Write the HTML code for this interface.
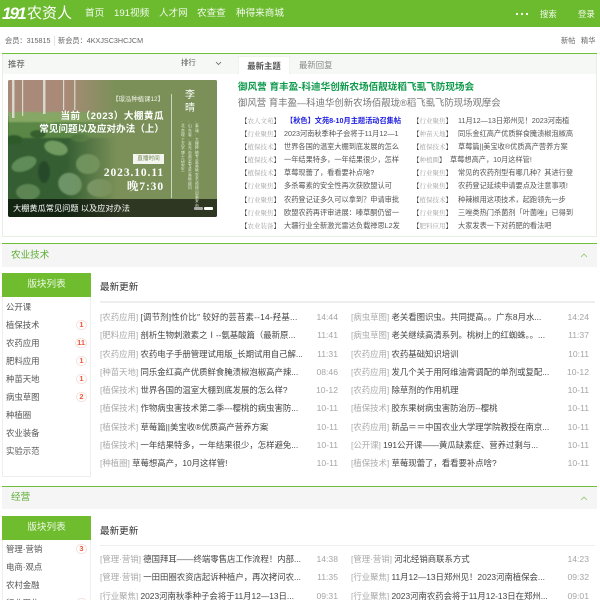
<!DOCTYPE html>
<html lang="zh-CN"><head><meta charset="utf-8"><title>191农资人</title>
<style>
*{margin:0;padding:0;box-sizing:border-box}
html,body{width:600px;height:600px;overflow:hidden;background:#fff}
body{position:relative;font-family:"Liberation Sans","Noto Sans CJK SC",sans-serif;font-size:8.4px;color:#444}
.a{position:absolute;white-space:nowrap}
.nav{left:0;top:0;width:600px;height:27px;background:#6cbb2f}
.nv{color:#f2f9ec;font-size:9.6px;top:8px;line-height:12px}
.sub{color:#666;top:35px;line-height:12px;font-size:7.2px}
.box{border:1px solid #e6efe1;border-top:0;background:#fff}
.ln{background:#6cc03a;height:1px}
.hd{background:#f5f8f5}
.hot{font-size:7.2px;line-height:13.2px;color:#555;overflow:hidden}
.hot div{white-space:nowrap;overflow:hidden;height:13.2px}
.hot i{font-style:normal;font-family:"Liberation Serif","Noto Serif CJK SC",serif;color:#a0a0a0;font-size:6.5px;display:inline-block;width:43px}
.hot i b{font-weight:400;color:#444}
.sec{background:#f5f5f5;left:2px;width:595px;height:24px}
.sect{color:#5fae35;font-size:9.6px;left:11px;line-height:14px}
.side{left:2px;width:89px;border:1px solid #eee;border-top:0;background:#fff}
.sh{left:2px;width:89px;height:24px;background:#6fbd2e;color:#eef8e6;font-size:9.6px;text-align:center;line-height:24px}
.si{height:18px;line-height:18px;padding-left:3px;color:#555;font-size:8.4px;position:relative}
.si u{text-decoration:none;position:absolute;right:3px;top:4px;min-width:11px;height:10px;border:1px solid #f4e0dc;border-radius:6px;color:#f0583c;font-size:7.5px;line-height:8.5px;text-align:center;padding:0 1px;font-weight:700}
.up{font-size:9.6px;color:#333;left:100px;line-height:14px}
.dv{height:2px;background:#eee}
.ls{line-height:18.3px;font-size:8.4px;color:#444}
.ls div{height:18.3px;white-space:nowrap;position:relative}
.ls em{font-style:normal;color:#aaa;font-size:8.4px}
.ls s{text-decoration:none;position:absolute;right:0;top:0;color:#a5a5a5;font-size:8.6px;letter-spacing:0}
.vt{white-space:normal;word-break:break-all;width:5px;font-size:3.8px;line-height:4.4px;color:#e6ebd8;top:120px}
</style></head><body>

<div class="a nav"></div>
<div class="a" style="left:2px;top:4px;color:#fff;font:italic 700 17px/20px 'Liberation Sans',sans-serif;letter-spacing:-1.8px">191</div>
<div class="a" style="left:27px;top:5px;color:#fff;font-size:15px;line-height:18px">农资人</div>
<div class="a nv" style="left:85px">首页</div>
<div class="a nv" style="left:114px">191视频</div>
<div class="a nv" style="left:159px">人才网</div>
<div class="a nv" style="left:197px">农查查</div>
<div class="a nv" style="left:236px">种得来商城</div>
<svg class="a" style="left:515px;top:12px" width="15" height="4"><circle cx="2" cy="2" r="1.1" fill="#fff"/><circle cx="7" cy="2" r="1.1" fill="#fff"/><circle cx="12" cy="2" r="1.1" fill="#fff"/></svg>
<div class="a nv" style="left:540px;font-size:8.4px">搜索</div>
<div class="a nv" style="left:578px;font-size:8.4px">登录</div>

<div class="a sub" style="left:5px">会员：315815</div>
<div class="a" style="left:54px;top:36px;width:1px;height:10px;background:#e5e5e5"></div>
<div class="a sub" style="left:58px">新会员：4KXJSC3HCJCM</div>
<div class="a sub" style="left:561px">新帖</div>
<div class="a sub" style="left:581px">精华</div>

<!-- top panel -->
<div class="a box" style="left:2px;top:53px;width:595px;height:184px"></div>
<div class="a hd" style="left:3px;top:54px;width:593px;height:20px"></div>
<div class="a ln" style="left:2px;top:53px;width:595px"></div>
<div class="a" style="left:8px;top:58px;font-size:8.4px;line-height:12px;color:#555">推荐</div>
<div class="a" style="left:181px;top:57px;font-size:7.4px;line-height:12px;color:#555">排行</div>
<svg class="a" style="left:215px;top:61px" width="7" height="5"><path d="M1 1l2.5 2.5L6 1" fill="none" stroke="#666" stroke-width=".8"/></svg>
<div class="a" style="left:238px;top:56px;width:52px;height:18px;background:#fff;border:1px solid #eef3ec;border-bottom:0;text-align:center;line-height:18px;font-size:8.4px;color:#555;font-weight:700">最新主题</div>
<div class="a" style="left:299px;top:58px;line-height:14px;font-size:8.4px;color:#888">最新回复</div>

<!-- banner -->
<svg class="a" style="left:8px;top:80px;border-radius:2px" width="209" height="137" viewBox="0 0 209 137">
<defs>
<linearGradient id="g" x1="0" x2="1"><stop offset=".28" stop-color="#7a9058" stop-opacity="0"/><stop offset=".52" stop-color="#7a9058"/></linearGradient>
<filter id="b"><feGaussianBlur stdDeviation=".9"/></filter>
</defs>
<rect width="209" height="137" fill="#355f33"/>
<rect width="110" height="36" fill="#a98a78"/>
<g filter="url(#b)">
<rect x="0" y="32" width="110" height="12" fill="#86a765"/>
<rect x="0" y="42" width="110" height="16" fill="#5a8745"/>
<g fill="#85a860"><ellipse cx="12" cy="38" rx="6" ry="3"/><ellipse cx="42" cy="40" rx="7" ry="3"/><ellipse cx="72" cy="38" rx="8" ry="3"/></g>
<ellipse cx="16" cy="84" rx="13" ry="7" fill="#5f8c58" transform="rotate(-20 16 84)"/>
<ellipse cx="48" cy="68" rx="12" ry="7" fill="#6f9a5e" transform="rotate(15 48 68)"/>
<ellipse cx="80" cy="84" rx="12" ry="10" fill="#6a9460"/>
<ellipse cx="62" cy="104" rx="12" ry="11" fill="#6d9467" transform="rotate(30 62 104)"/>
<ellipse cx="20" cy="112" rx="12" ry="8" fill="#5c8552"/>
<ellipse cx="92" cy="108" rx="13" ry="9" fill="#78996e"/>
<ellipse cx="36" cy="92" rx="6" ry="11" fill="#264a29"/>
<ellipse cx="6" cy="60" rx="9" ry="5" fill="#2f5a2c"/>
<ellipse cx="30" cy="54" rx="8" ry="4" fill="#34602f"/>
<ellipse cx="72" cy="58" rx="9" ry="4" fill="#46733a"/>
</g>
<g fill="#d8d8cc"><rect x="4" y="0" width="2.5" height="38"/><rect x="35" y="0" width="2.5" height="34"/><rect x="14" y="0" width="1.2" height="36"/><rect x="55" y="0" width="1.2" height="30"/><rect x="66" y="0" width="1.5" height="30"/></g>
<rect width="209" height="137" fill="url(#g)"/>
<rect x="163" y="14" width="1" height="104" fill="#cdd6bc"/>
<rect y="119" width="209" height="18" fill="#000" opacity=".62"/>
<rect x="186" y="127" width="9" height="3" rx="1" fill="#aaa"/><rect x="196" y="127" width="9" height="3" rx="1" fill="#fff"/>
</svg>
<div class="a" style="left:104px;top:95px;width:60px;text-align:right;font-size:6.4px;line-height:10px;color:#f0f3e6">【璟泓种植课12】</div>
<div class="a" style="left:30px;top:110px;width:134px;text-align:right;font-size:9.6px;line-height:13px;color:#fff;font-weight:700"><span style="letter-spacing:.45px">当前（2023）大棚黄瓜</span><br>常见问题以及应对办法（上）</div>
<div class="a" style="left:133px;top:154px;width:31px;height:10px;background:#f4f5ef;color:#6f8650;font-size:5.6px;line-height:10px;text-align:center">直播时间</div>
<div class="a" style="left:80px;top:166px;width:84px;text-align:right;font:700 11.5px/14px 'Liberation Serif','Noto Serif CJK SC',serif;color:#fff;letter-spacing:.9px">2023.10.11<br>晚7:30</div>
<div class="a" style="left:185px;top:89px;font-size:10px;line-height:13px;color:#fff;width:12px">李<br>晴</div>
<div class="a vt" style="left:195px">·泰瑞·大棚种植专家高级农艺师顾问泰安市</div>
<div class="a vt" style="left:188px">·山东省·寿光市蔬菜专家高级顾问</div>
<div class="a vt" style="left:181px">·北京理工大学博士研究生</div>
<div class="a" style="left:13px;top:202px;font-size:8.2px;line-height:13px;color:#fff">大棚黄瓜常见问题 以及应对办法</div>

<!-- headline -->
<div class="a" style="left:238px;top:81px;font-size:9.6px;line-height:14px;color:#0f9a4c;font-weight:700">御风营 育丰盈-科迪华创新农场佰靓珑稻飞虱飞防现场会</div>
<div class="a" style="left:238px;top:96px;font-size:9.4px;line-height:14px;color:#777">御风营 育丰盈—科迪华创新农场佰靓珑®稻飞虱飞防现场观摩会</div>

<div class="a hot" style="left:241px;top:113.5px;width:162px">
<div><i><b>【</b>农人文苑<b>】</b></i><span style="color:#1a1ae0;font-weight:700;margin-left:2px">【秋色】文苑8-10月主题活动召集帖</span></div>
<div><i><b>【</b>行业聚焦<b>】</b></i>2023河南秋季种子会将于11月12—1</div>
<div><i><b>【</b>植保技术<b>】</b></i>世界各国的温室大棚到底发展的怎么</div>
<div><i><b>【</b>植保技术<b>】</b></i>一年结果特多，一年结果很少，怎样</div>
<div><i><b>【</b>植保技术<b>】</b></i>草莓现蕾了，看看要补点啥?</div>
<div><i><b>【</b>行业聚焦<b>】</b></i>多杀霉素的安全性再次获欧盟认可</div>
<div><i><b>【</b>行业聚焦<b>】</b></i>农药登记证多久可以拿到？申请审批</div>
<div><i><b>【</b>行业聚焦<b>】</b></i>欧盟农药再评审进展：嗪草酮仍留一</div>
<div><i><b>【</b>农业装备<b>】</b></i>大疆行业全新激光雷达负载禅思L2发</div>
</div>
<div class="a hot" style="left:413px;top:113.5px;width:165px">
<div><i style="width:45px"><b>【</b>行业聚焦<b>】</b></i>11月12—13日郑州见！2023河南植</div>
<div><i style="width:45px"><b>【</b>种苗天地<b>】</b></i>同乐金红高产优质鲜食腌渍椒泡椒高</div>
<div><i style="width:45px"><b>【</b>植保技术<b>】</b></i>草莓篇||美宝收®优质高产营养方案</div>
<div><i style="width:37px"><b>【</b>种植圈<b>】</b></i>草莓想高产，10月这样管!</div>
<div><i style="width:45px"><b>【</b>行业聚焦<b>】</b></i>常见的农药剂型有哪几种？其进行登</div>
<div><i style="width:45px"><b>【</b>行业聚焦<b>】</b></i>农药登记延续申请要点及注意事项!</div>
<div><i style="width:45px"><b>【</b>植保技术<b>】</b></i>种辣椒用这项技术，起跑领先一步</div>
<div><i style="width:45px"><b>【</b>行业聚焦<b>】</b></i>三唑类热门杀菌剂「叶菌唑」已得到</div>
<div><i style="width:45px"><b>【</b>肥料应用<b>】</b></i>大家发表一下对药肥的看法吧</div>
</div>

<!-- section 1 -->
<div class="a sec" style="top:243px"></div>
<div class="a ln" style="left:2px;top:243px;width:595px"></div>
<div class="a sect" style="top:249px">农业技术</div>
<svg class="a" style="left:580px;top:253px" width="8" height="5"><path d="M1 4l3-3 3 3" fill="none" stroke="#8cc66a" stroke-width=".8"/></svg>

<div class="a side" style="top:297px;height:180px;padding-top:.7px">
<div class="si">公开课</div>
<div class="si">植保技术<u>1</u></div>
<div class="si">农药应用<u>11</u></div>
<div class="si">肥料应用<u>1</u></div>
<div class="si">种苗天地<u>1</u></div>
<div class="si">病虫草图<u>2</u></div>
<div class="si">种植圈</div>
<div class="si">农业装备</div>
<div class="si">实验示范</div>
</div>
<div class="a sh" style="top:273px">版块列表</div>
<div class="a up" style="top:281px">最新更新</div>
<div class="a dv" style="left:100px;top:301px;width:495px"></div>

<div class="a ls" style="left:100px;top:308px;width:238px">
<div><em>[农药应用]</em> <span style="letter-spacing:.2px">[调节剂]性价比″ 较好的芸苔素--14-羟基...</span><s>14:44</s></div>
<div><em>[肥料应用]</em> 剖析生物刺激素之Ⅰ--氨基酸篇（最新原...<s>11:41</s></div>
<div><em>[农药应用]</em> 农药电子手册管理试用版_长期试用自己解...<s>11:31</s></div>
<div><em>[种苗天地]</em> 同乐金红高产优质鲜食腌渍椒泡椒高产辣...<s>08:46</s></div>
<div><em>[植保技术]</em> 世界各国的温室大棚到底发展的怎么样?<s>10-12</s></div>
<div><em>[植保技术]</em> 作物病虫害技术第二季---樱桃的病虫害防...<s>10-11</s></div>
<div><em>[植保技术]</em> 草莓篇||美宝收®优质高产营养方案<s>10-11</s></div>
<div><em>[植保技术]</em> 一年结果特多，一年结果很少，怎样避免...<s>10-11</s></div>
<div><em>[种植圈]</em> 草莓想高产，10月这样管!<s>10-11</s></div>
</div>
<div class="a ls" style="left:351px;top:308px;width:238px">
<div><em>[病虫草图]</em> 老关看图识虫。共同提高。。广东8月水...<s>14:24</s></div>
<div><em>[病虫草图]</em> 老关继续高清系列。桃树上的红蜘蛛。。...<s>11:37</s></div>
<div><em>[农药应用]</em> 农药基础知识培训<s>10:11</s></div>
<div><em>[农药应用]</em> 发几个关于用阿维油膏调配的单剂或复配...<s>10-12</s></div>
<div><em>[农药应用]</em> 除草剂的作用机理<s>10-11</s></div>
<div><em>[植保技术]</em> 胶东果树病虫害防治历--樱桃<s>10-11</s></div>
<div><em>[农药应用]</em> 新品＝＝中国农业大学理学院教授在南京...<s>10-11</s></div>
<div><em>[公开课]</em> 191公开课——黄瓜缺素症、营养过剩与...<s>10-11</s></div>
<div><em>[植保技术]</em> 草莓现蕾了，看看要补点啥?<s>10-11</s></div>
</div>

<!-- section 2 -->
<div class="a sec" style="top:486px;height:23px"></div>
<div class="a ln" style="left:2px;top:486px;width:595px"></div>
<div class="a sect" style="top:491px">经营</div>
<svg class="a" style="left:580px;top:496px" width="8" height="5"><path d="M1 4l3-3 3 3" fill="none" stroke="#8cc66a" stroke-width=".8"/></svg>

<div class="a side" style="top:540px;height:70px">
<div class="si">管理·营销<u>3</u></div>
<div class="si">电商·观点</div>
<div class="si">农村金融</div>
<div class="si">行业聚焦<u>1</u></div>
</div>
<div class="a sh" style="top:516px">版块列表</div>
<div class="a up" style="top:525px">最新更新</div>
<div class="a dv" style="left:100px;top:544.5px;width:495px;height:1.5px"></div>

<div class="a ls" style="left:100px;top:550px;width:238px">
<div><em>[管理·营销]</em> 德国拜耳——终端零售店工作流程！内部...<s>14:38</s></div>
<div><em>[管理·营销]</em> 一田田圈农资店起诉种植户，再次拷问农...<s>11:35</s></div>
<div><em>[行业聚焦]</em> 2023河南秋季种子会将于11月12—13日...<s>09:31</s></div>
</div>
<div class="a ls" style="left:351px;top:550px;width:238px">
<div><em>[管理·营销]</em> 河北经销商联系方式<s>14:23</s></div>
<div><em>[行业聚焦]</em> 11月12—13日郑州见！2023河南植保会...<s>09:32</s></div>
<div><em>[行业聚焦]</em> 2023河南农药会将于11月12-13日在郑州...<s>09:01</s></div>
</div>
</body></html>
